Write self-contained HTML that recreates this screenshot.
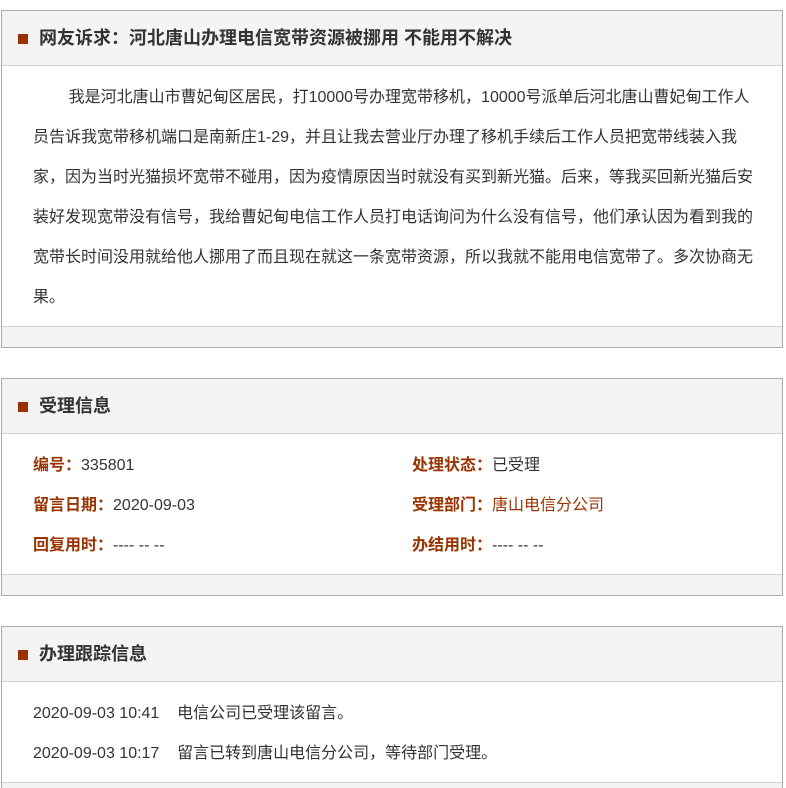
<!DOCTYPE html>
<html><head><meta charset="utf-8"><style>
*{margin:0;padding:0;box-sizing:border-box}
html,body{width:786px;height:788px;overflow:hidden}
body{background:#fff;font-family:"Liberation Sans","Noto Sans CJK SC",sans-serif;color:#333;font-size:16px;position:relative}
.box{position:absolute;left:1px;width:782px;border:1px solid #aaa;background:#fff;overflow:hidden}
.hd{height:55px;background:#f4f4f4;border-bottom:1px solid #d0d0d0;position:relative}
.hd i{position:absolute;left:16px;top:23px;width:10px;height:10px;background:#993300}
.hd b{position:absolute;left:37px;top:15px;font-size:18px;line-height:24px;color:#333;white-space:nowrap}
.ft{height:21px;background:#f4f4f4;border-top:1px solid #d0d0d0}
.txt{padding:12px 30px 0 31px;line-height:40px;white-space:nowrap;font-size:16px;overflow:hidden}
.row{position:absolute;white-space:nowrap;line-height:20px}
.lb{color:#993300;font-weight:bold}
</style></head><body>
<div class="box" style="top:10px;height:338px">
 <div class="hd"><i></i><b>网友诉求：河北唐山办理电信宽带资源被挪用 不能用不解决</b></div>
 <div class="txt" style="height:260px">&nbsp;&nbsp;&nbsp;&nbsp;&nbsp;&nbsp;&nbsp;&nbsp;我是河北唐山市曹妃甸区居民，打10000号办理宽带移机，10000号派单后河北唐山曹妃甸工作人<br>员告诉我宽带移机端口是南新庄1-29，并且让我去营业厅办理了移机手续后工作人员把宽带线装入我<br>家，因为当时光猫损坏宽带不碰用，因为疫情原因当时就没有买到新光猫。后来，等我买回新光猫后安<br>装好发现宽带没有信号，我给曹妃甸电信工作人员打电话询问为什么没有信号，他们承认因为看到我的<br>宽带长时间没用就给他人挪用了而且现在就这一条宽带资源，所以我就不能用电信宽带了。多次协商无<br>果。</div>
 <div class="ft"></div>
</div>
<div class="box" style="top:378px;height:218px">
 <div class="hd"><i></i><b>受理信息</b></div>
 <div style="height:140px;position:relative">
  <div class="row" style="left:31px;top:22px"><span class="lb">编号：</span>335801</div>
  <div class="row" style="left:410px;top:22px"><span class="lb">处理状态：</span>已受理</div>
  <div class="row" style="left:31px;top:62px"><span class="lb">留言日期：</span>2020-09-03</div>
  <div class="row" style="left:410px;top:62px"><span class="lb">受理部门：</span><span style="color:#993300">唐山电信分公司</span></div>
  <div class="row" style="left:31px;top:102px"><span class="lb">回复用时：</span>---- -- --</div>
  <div class="row" style="left:410px;top:102px"><span class="lb">办结用时：</span>---- -- --</div>
 </div>
 <div class="ft"></div>
</div>
<div class="box" style="top:626px;height:162px;border-bottom:none">
 <div class="hd"><i></i><b>办理跟踪信息</b></div>
 <div style="height:100px;position:relative">
  <div class="row" style="left:31px;top:22px">2020-09-03 10:41&nbsp;&nbsp;&nbsp;&nbsp;电信公司已受理该留言。</div>
  <div class="row" style="left:31px;top:62px">2020-09-03 10:17&nbsp;&nbsp;&nbsp;&nbsp;留言已转到唐山电信分公司，等待部门受理。</div>
 </div>
 <div class="ft"></div>
</div>
</body></html>
